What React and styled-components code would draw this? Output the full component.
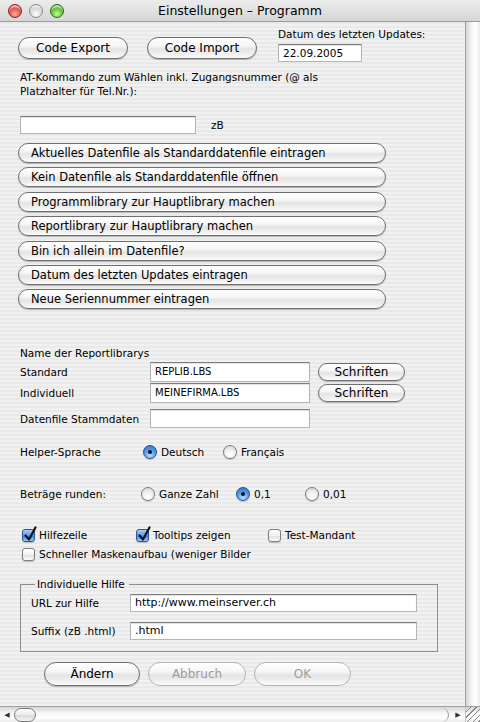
import styled, { createGlobalStyle, css } from "styled-components";

const GlobalStyle = createGlobalStyle`
  html, body {
    margin: 0;
    padding: 0;
    background: #e8e8e8;
  }
  * {
    box-sizing: border-box;
  }
`;

const FONT = `"DejaVu Sans", "Lucida Grande", Verdana, sans-serif`;

const Window = styled.div`
  width: 480px;
  height: 722px;
  display: flex;
  flex-direction: column;
  overflow: hidden;
  font-family: ${FONT};
  color: #000;
  background: repeating-linear-gradient(#f1f1f1 0 2px, #e9e9e9 2px 4px);
`;

const TitleBar = styled.div`
  height: 22px;
  flex: none;
  display: flex;
  align-items: center;
  position: relative;
  padding-left: 8px;
  gap: 7px;
  background: linear-gradient(#ececec, #d6d6d6);
  border-bottom: 1px solid #9a9a9a;
`;

const Light = styled.span`
  width: 14px;
  height: 14px;
  border-radius: 50%;
  border: 1px solid ${(p) => p.$edge};
  background: radial-gradient(circle at 50% 75%, ${(p) => p.$glow} 0%, ${(p) => p.$base} 70%);
  box-shadow: inset 0 3px 2px -1px rgba(255, 255, 255, 0.8);
`;

const Title = styled.div`
  position: absolute;
  left: 0;
  right: 0;
  text-align: center;
  font-size: 12.5px;
  pointer-events: none;
`;

const Main = styled.div`
  flex: 1;
  display: flex;
  min-height: 0;
`;

const Content = styled.div`
  flex: 1;
  padding: 5px 0 0 18px;
  font-size: 10.5px;
`;

const VScroll = styled.div`
  width: 15px;
  flex: none;
  border-left: 1px solid #a0a0a0;
  background: linear-gradient(90deg, #d4d4d4, #f6f6f6 40%, #ffffff 70%, #ececec);
`;

const HScroll = styled.div`
  height: 16px;
  flex: none;
  display: flex;
  align-items: center;
  border-top: 1px solid #a0a0a0;
  background: linear-gradient(#d6d6d6, #f6f6f6 40%, #ffffff 70%, #ececec);
`;

const Arrow = styled.span`
  width: 14px;
  font-size: 7px;
  text-align: center;
  color: #333;
`;

const Thumb = styled.span`
  width: 22px;
  height: 14px;
  border: 1px solid #7a7a7a;
  border-radius: 7px;
  background: linear-gradient(#ffffff, #eaeaea 50%, #d9d9d9 55%, #f4f4f4);
`;

const Track = styled.span`
  flex: 1;
  height: 14px;
  margin-right: 2px;
  border-radius: 0 7px 7px 0;
  border-right: 1px solid #9a9a9a;
`;

const Grip = styled.span`
  width: 15px;
  height: 15px;
  align-self: flex-end;
  background: repeating-linear-gradient(135deg, transparent 0 3px, #8a8a8a 3px 4px);
  border-left: 1px solid #c0c0c0;
`;

const aquaButton = css`
  font-family: ${FONT};
  color: #000;
  border: 1px solid #6f6f6f;
  border-radius: 12px;
  background: linear-gradient(#ffffff 0%, #f6f6f6 40%, #e4e4e4 55%, #efefef 80%, #fbfbfb 100%);
  box-shadow: 0 1px 1px rgba(0, 0, 0, 0.25);
  padding: 0 12px;
  text-align: left;
  white-space: nowrap;
`;

const Button = styled.button`
  ${aquaButton};
  height: ${(p) => p.$h || 22}px;
  width: ${(p) => p.$w}px;
  font-size: 12px;
  text-align: center;
  &:disabled {
    color: #9c9c9c;
    border-color: #b4b4b4;
    box-shadow: none;
  }
`;

const TopRow = styled.div`
  display: flex;
  align-items: flex-start;
`;

const TopButtons = styled.div`
  display: flex;
  gap: 19px;
  margin-top: 10px;
`;

const DateGroup = styled.div`
  margin-left: 21px;
  display: flex;
  flex-direction: column;
  gap: 3px;
`;

const Label = styled.span`
  font-size: 10.5px;
  line-height: 14px;
  white-space: nowrap;
  width: ${(p) => (p.$w ? `${p.$w}px` : "auto")};
  flex: none;
`;

const Field = styled.div`
  height: ${(p) => p.$h || 18}px;
  width: ${(p) => p.$w}px;
  flex: none;
  background: #fff;
  border: 1px solid #b5b5b5;
  border-top-color: #7b7b7b;
  box-shadow: inset 0 1px 1px rgba(0, 0, 0, 0.12);
  font-size: ${(p) => p.$fs || 10}px;
  line-height: ${(p) => (p.$h || 18) - 2}px;
  padding-left: 4px;
  white-space: nowrap;
`;

const Hint = styled.p`
  margin: 8px 0 0 2px;
  width: 330px;
  font-size: 10.5px;
  line-height: 14px;
`;

const Row = styled.div`
  display: flex;
  align-items: center;
  gap: ${(p) => p.$gap || 0}px;
  margin-top: ${(p) => p.$mt || 0}px;
  margin-left: ${(p) => p.$ml || 0}px;
  height: ${(p) => (p.$h ? `${p.$h}px` : "auto")};
`;

const ButtonList = styled.div`
  display: flex;
  flex-direction: column;
  gap: 4.4px;
  margin-top: 9px;
`;

const WideButton = styled.button`
  ${aquaButton};
  height: 20px;
  width: 368px;
  font-size: 11.5px;
`;

const SmallButton = styled.button`
  ${aquaButton};
  height: 18px;
  width: 87px;
  font-size: 12px;
  text-align: center;
  padding: 0;
  margin-left: 8px;
`;

const Section = styled.div`
  margin: ${(p) => p.$mt || 0}px 0 0 2px;
`;

const Option = styled.label`
  display: flex;
  align-items: center;
  gap: 4px;
  font-size: 10.5px;
  width: ${(p) => (p.$w ? `${p.$w}px` : "auto")};
`;

const RadioDot = styled.span`
  width: 14px;
  height: 14px;
  flex: none;
  border-radius: 50%;
  border: 1px solid ${(p) => (p.$on ? "#28508f" : "#7c7c7c")};
  display: flex;
  align-items: center;
  justify-content: center;
  background: ${(p) =>
    p.$on
      ? "radial-gradient(circle at 50% 80%, #b9dcff 0%, #4f95e8 55%, #2d6bc8 100%)"
      : "radial-gradient(circle at 50% 80%, #ffffff 0%, #f0f0f0 50%, #cfcfcf 100%)"};
  box-shadow: 0 1px 1px rgba(0, 0, 0, 0.2);
  &::after {
    content: "";
    width: 4px;
    height: 4px;
    border-radius: 50%;
    background: #111;
    display: ${(p) => (p.$on ? "block" : "none")};
  }
`;

const Box = styled.span`
  width: 13px;
  height: 13px;
  flex: none;
  border-radius: 3px;
  position: relative;
  border: 1px solid ${(p) => (p.$on ? "#2c5592" : "#7c7c7c")};
  background: ${(p) =>
    p.$on
      ? "linear-gradient(#a9d0fb, #5a9ae8 50%, #3f83de 55%, #9ccbff)"
      : "linear-gradient(#ffffff, #f1f1f1 50%, #e1e1e1 55%, #fafafa)"};
  box-shadow: 0 1px 1px rgba(0, 0, 0, 0.2);
  svg {
    position: absolute;
    left: 0;
    top: -4px;
  }
`;

const Fieldset = styled.fieldset`
  margin: 16px 0 0 2px;
  width: 418px;
  height: 74px;
  padding: 4px 0 0 10px;
  border: 1px solid #8e8e8e;
  legend {
    font-size: 10.5px;
    padding: 0 4px 0 2px;
    margin-left: 4px;
    line-height: 12px;
  }
`;

const BottomButtons = styled.div`
  display: flex;
  gap: 8px;
  margin: 10px 0 0 26px;
`;

function Radio({ on, children, w }) {
  return (
    <Option $w={w}>
      <RadioDot $on={on} />
      {children}
    </Option>
  );
}

function Check({ on, children, w }) {
  return (
    <Option $w={w}>
      <Box $on={on}>
        {on && (
          <svg width="15" height="16" viewBox="0 0 15 16">
            <path d="M2.5 9.5 L6 13.5 L12.5 1.5" fill="none" stroke="#111" strokeWidth="2.2" strokeLinecap="round" strokeLinejoin="round" />
          </svg>
        )}
      </Box>
      {children}
    </Option>
  );
}

const actions = [
  "Aktuelles Datenfile als Standarddatenfile eintragen",
  "Kein Datenfile als Standarddatenfile öffnen",
  "Programmlibrary zur Hauptlibrary machen",
  "Reportlibrary zur Hauptlibrary machen",
  "Bin ich allein im Datenfile?",
  "Datum des letzten Updates eintragen",
  "Neue Seriennummer eintragen",
];

export default function App() {
  return (
    <Window>
      <GlobalStyle />
      <TitleBar>
        <Light $base="#d8302c" $glow="#ffb0a0" $edge="#8a1f1c" />
        <Light $base="#c8c8c8" $glow="#ffffff" $edge="#8c8c8c" />
        <Light $base="#3fa61d" $glow="#c6ff90" $edge="#2a6b17" />
        <Title>Einstellungen – Programm</Title>
      </TitleBar>
      <Main>
        <Content>
          <TopRow>
            <TopButtons>
              <Button $w={110}>Code Export</Button>
              <Button $w={110}>Code Import</Button>
            </TopButtons>
            <DateGroup>
              <Label>Datum des letzten Updates:</Label>
              <Field $w={84} $fs={10.5}>22.09.2005</Field>
            </DateGroup>
          </TopRow>

          <Hint>AT-Kommando zum Wählen inkl. Zugangsnummer (@ als Platzhalter für Tel.Nr.):</Hint>

          <Row $mt={18} $ml={2} $gap={15}>
            <Field $w={176} />
            <Label>zB</Label>
          </Row>

          <ButtonList>
            {actions.map((a) => (
              <WideButton key={a}>{a}</WideButton>
            ))}
          </ButtonList>

          <Section $mt={37}>
            <Label>Name der Reportlibrarys</Label>
            <Row $mt={2} $h={20}>
              <Label $w={130}>Standard</Label>
              <Field $w={160} $h={20}>REPLIB.LBS</Field>
              <SmallButton>Schriften</SmallButton>
            </Row>
            <Row $mt={1} $h={20}>
              <Label $w={130}>Individuell</Label>
              <Field $w={160} $h={20}>MEINEFIRMA.LBS</Field>
              <SmallButton>Schriften</SmallButton>
            </Row>
            <Row $mt={6} $h={19}>
              <Label $w={130}>Datenfile Stammdaten</Label>
              <Field $w={160} $h={19} />
            </Row>

            <Row $mt={16} $h={16}>
              <Label $w={123}>Helper-Sprache</Label>
              <Radio on w={80}>Deutsch</Radio>
              <Radio>Français</Radio>
            </Row>

            <Row $mt={26} $h={16}>
              <Label $w={121}>Beträge runden:</Label>
              <Radio w={95}>Ganze Zahl</Radio>
              <Radio on w={69}>0,1</Radio>
              <Radio>0,01</Radio>
            </Row>

            <Row $mt={25} $h={16} $ml={2}>
              <Check on w={114}>Hilfezeile</Check>
              <Check on w={132}>Tooltips zeigen</Check>
              <Check>Test-Mandant</Check>
            </Row>
            <Row $mt={3} $h={16} $ml={2}>
              <Check>Schneller Maskenaufbau (weniger Bilder</Check>
            </Row>
          </Section>

          <Fieldset>
            <legend>Individuelle Hilfe</legend>
            <Row $h={18}>
              <Label $w={99}>URL zur Hilfe</Label>
              <Field $w={287} $fs={11}>http://www.meinserver.ch</Field>
            </Row>
            <Row $mt={10} $h={18}>
              <Label $w={99}>Suffix (zB .html)</Label>
              <Field $w={287} $fs={11}>.html</Field>
            </Row>
          </Fieldset>

          <BottomButtons>
            <Button $w={96} $h={24}>Ändern</Button>
            <Button $w={98} $h={24} disabled>Abbruch</Button>
            <Button $w={97} $h={24} disabled>OK</Button>
          </BottomButtons>
        </Content>
        <VScroll />
      </Main>
      <HScroll>
        <Arrow>◀</Arrow>
        <Thumb />
        <Track />
        <Arrow>▶</Arrow>
        <Grip />
      </HScroll>
    </Window>
  );
}
